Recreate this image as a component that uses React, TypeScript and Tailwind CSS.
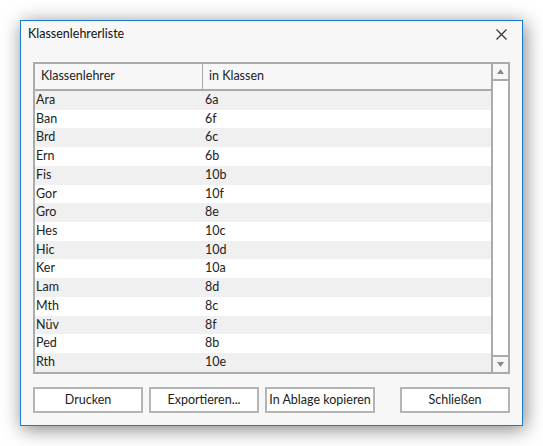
const rows: [string, string][] = [
  ['Ara', '6a'],
  ['Ban', '6f'],
  ['Brd', '6c'],
  ['Ern', '6b'],
  ['Fis', '10b'],
  ['Gor', '10f'],
  ['Gro', '8e'],
  ['Hes', '10c'],
  ['Hic', '10d'],
  ['Ker', '10a'],
  ['Lam', '8d'],
  ['Mth', '8c'],
  ['Nüv', '8f'],
  ['Ped', '8b'],
  ['Rth', '10e'],
]

const font = { fontFamily: 'Lato, "Noto Sans", sans-serif' }

function Btn({ label }: { label: string }) {
  return (
    <button
      type="button"
      className="w-[110px] h-[26px] bg-white border-2 border-[#b4b4b4] text-[12.5px] text-[#222] whitespace-nowrap flex items-center justify-center"
    >
      {label}
    </button>
  )
}

export default function App() {
  return (
    <div className="w-[543px] h-[446px] bg-white p-[20px]" style={font}>
      <div className="w-[503px] h-[406px] border border-[#1a7acb] bg-[#f7f7f7] shadow-[2px_3px_18px_rgba(0,0,0,0.5)] flex flex-col">
        {/* title bar */}
        <div className="h-[26px] flex items-center justify-between pl-[7px] pr-[15px]">
          <span className="text-[12.5px] text-[#111]">Klassenlehrerliste</span>
          <svg width="11" height="11" viewBox="0 0 11 11" className="text-[#333]">
            <path d="M0.5 0.5L10.5 10.5M10.5 0.5L0.5 10.5" stroke="currentColor" strokeWidth="1.2" />
          </svg>
        </div>

        {/* list */}
        <div className="ml-[12px] mt-[15px] w-[477px] h-[312px] border-2 border-[#ababab] flex">
          <div className="flex-1 flex flex-col">
            <div className="h-[27px] flex border-b-2 border-[#ababab] bg-[#f7f7f7] text-[12.5px] text-[#222]">
              <div className="w-[168px] border-r border-[#ababab] flex items-center pl-[6px]">Klassenlehrer</div>
              <div className="flex-1 flex items-center pl-[6px]">in Klassen</div>
            </div>
            {rows.map(([k, c], i) => (
              <div
                key={k}
                className={`h-[18.73px] flex items-center text-[12.5px] text-[#222] ${i % 2 === 0 ? 'bg-[#f0f0f0]' : 'bg-white'}`}
              >
                <div className="w-[168px] pl-[1px]">{k}</div>
                <div className="flex-1 pl-[2px]">{c}</div>
              </div>
            ))}
          </div>
          <div className="w-[17px] border-l-2 border-[#ababab] bg-white flex flex-col justify-between">
            <div className="h-[17px] border-b-2 border-[#ababab] bg-[#f7f7f7] flex items-center justify-center">
              <svg width="7" height="5" viewBox="0 0 7 5">
                <path d="M3.5 0L7 5H0Z" fill="#8a8a8a" />
              </svg>
            </div>
            <div className="h-[17px] border-t-2 border-[#ababab] bg-[#f7f7f7] flex items-center justify-center">
              <svg width="7" height="5" viewBox="0 0 7 5">
                <path d="M0 0H7L3.5 5Z" fill="#8a8a8a" />
              </svg>
            </div>
          </div>
        </div>

        {/* buttons */}
        <div className="ml-[12px] mt-[13px] w-[477px] flex gap-[6px]">
          <Btn label="Drucken" />
          <Btn label="Exportieren..." />
          <Btn label="In Ablage kopieren" />
          <div className="ml-auto">
            <Btn label="Schließen" />
          </div>
        </div>
      </div>
    </div>
  )
}
